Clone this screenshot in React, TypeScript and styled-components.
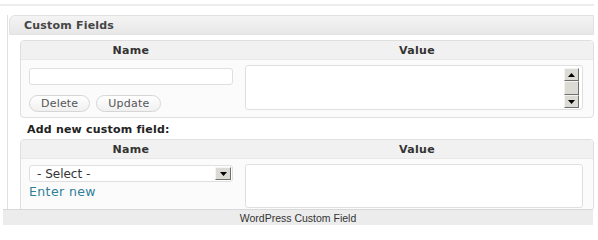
import React from 'react';
import styled, { createGlobalStyle } from 'styled-components';

const GlobalStyle = createGlobalStyle`
  html, body {
    margin: 0;
    padding: 0;
    background: #ffffff;
  }
  body {
    font-family: "DejaVu Sans", Verdana, sans-serif;
    color: #333333;
  }
`;

const Page = styled.div`
  width: 598px;
  height: 232px;
  padding-top: 4px;
  box-sizing: border-box;
  overflow: hidden;
`;

const Frame = styled.div`
  height: 205px;
  margin-right: 4px;
  border-top: 2px solid #ececec;
  box-sizing: border-box;
  padding: 9px 0 0 7px;
  overflow: hidden;
`;

const Postbox = styled.div`
  border-left: 1px solid #e0e0e0;
  height: 100%;
  box-sizing: border-box;
  padding-left: 1px;
`;

const TitleBar = styled.div`
  height: 20px;
  display: flex;
  align-items: center;
  padding-left: 14px;
  border: 1px solid #e2e2e2;
  border-radius: 6px 0 0 0;
  background: linear-gradient(#f4f4f4, #e7e7e7);
  font-size: 11px;
  font-weight: bold;
  letter-spacing: 0.2px;
  color: #464646;
  box-sizing: border-box;
`;

const Inside = styled.div`
  padding: 5px 0 0 11px;
`;

const Table = styled.div`
  display: grid;
  grid-template-columns: 220px 1fr;
  border: 1px solid #dfdfdf;
  border-radius: 4px;
  background: #fbfbfb;
  overflow: hidden;
`;

const HeadCell = styled.div`
  height: 18px;
  display: flex;
  align-items: center;
  justify-content: center;
  background: #f1f1f1;
  border-bottom: 1px solid #e8e8e8;
  font-size: 11px;
  font-weight: bold;
  letter-spacing: 0.3px;
  color: #333333;
`;

const NameCell = styled.div<{ $top: number }>`
  display: flex;
  flex-direction: column;
  align-items: flex-start;
  padding: ${({ $top }) => $top}px 0 5px 8px;
`;

const ValueCell = styled.div`
  padding: 5px 10px 5px 4px;
`;

const TextInput = styled.div`
  width: 204px;
  height: 17px;
  box-sizing: border-box;
  border: 1px solid #dfdfdf;
  border-radius: 3px;
  background: #ffffff;
`;

const Buttons = styled.div`
  display: flex;
  gap: 6px;
  margin-top: 10px;
`;

const Button = styled.div`
  height: 17px;
  padding: 0 11px;
  display: flex;
  align-items: center;
  box-sizing: border-box;
  border: 1px solid #d6d6d6;
  border-radius: 9px;
  background: linear-gradient(#ffffff, #f0f0f0);
  font-size: 11px;
  letter-spacing: 0.2px;
  color: #555555;
`;

const TextArea = styled.div<{ $height: number }>`
  position: relative;
  height: ${({ $height }) => $height}px;
  box-sizing: border-box;
  border: 1px solid #dfdfdf;
  border-radius: 3px;
  background: #ffffff;
`;

const ScrollBar = styled.div`
  position: absolute;
  right: 3px;
  top: 2px;
  bottom: 1px;
  width: 15px;
  display: flex;
  flex-direction: column;
  background: #e8e6e0;
`;

const ScrollButton = styled.div<{ $grow?: boolean }>`
  flex: ${({ $grow }) => ($grow ? '1' : '0 0 13px')};
  display: flex;
  align-items: center;
  justify-content: center;
  box-sizing: border-box;
  background: #dcdad4;
  border-top: 1px solid #f4f4f0;
  border-left: 1px solid #f4f4f0;
  border-right: 1px solid #6e6e6e;
  border-bottom: 1px solid #6e6e6e;
`;

const SubHeading = styled.div`
  padding: 5px 0 3px 7px;
  font-size: 11px;
  font-weight: bold;
  letter-spacing: 0.2px;
  color: #222222;
`;

const Select = styled.div`
  width: 204px;
  height: 17px;
  box-sizing: border-box;
  display: flex;
  align-items: center;
  justify-content: space-between;
  padding: 0 1px 0 7px;
  border: 1px solid #dfdfdf;
  border-radius: 3px;
  background: #ffffff;
  font-size: 12px;
  color: #333333;
`;

const SelectArrow = styled(ScrollButton)`
  flex: none;
  width: 16px;
  height: 13px;
`;

const EnterNew = styled.div`
  margin-top: 2px;
  font-size: 12.5px;
  color: #2e7f98;
  letter-spacing: 0.4px;
`;

const Footer = styled.div`
  height: 16px;
  margin: 0 5px 0 3px;
  display: flex;
  align-items: center;
  justify-content: center;
  background: #ececec;
  border-top: 1px solid #d8d8d8;
  font-family: "Liberation Sans", Arial, sans-serif;
  font-size: 10.5px;
  color: #333333;
  box-sizing: border-box;
`;

const Arrow: React.FC<{ up?: boolean }> = ({ up }) => (
  <svg width="7" height="4" viewBox="0 0 7 4">
    <polygon points={up ? '0,4 7,4 3.5,0' : '0,0 7,0 3.5,4'} fill="#000" />
  </svg>
);

const App: React.FC = () => {
  return (
    <Page>
      <GlobalStyle />
      <Frame>
        <Postbox>
          <TitleBar>Custom Fields</TitleBar>
          <Inside>
            <Table>
              <HeadCell>Name</HeadCell>
              <HeadCell>Value</HeadCell>
              <NameCell $top={8}>
                <TextInput />
                <Buttons>
                  <Button>Delete</Button>
                  <Button>Update</Button>
                </Buttons>
              </NameCell>
              <ValueCell>
                <TextArea $height={45}>
                  <ScrollBar>
                    <ScrollButton>
                      <Arrow up />
                    </ScrollButton>
                    <ScrollButton $grow />
                    <ScrollButton>
                      <Arrow />
                    </ScrollButton>
                  </ScrollBar>
                </TextArea>
              </ValueCell>
            </Table>
            <SubHeading>Add new custom field:</SubHeading>
            <Table>
              <HeadCell>Name</HeadCell>
              <HeadCell>Value</HeadCell>
              <NameCell $top={6}>
                <Select>
                  - Select -
                  <SelectArrow>
                    <Arrow />
                  </SelectArrow>
                </Select>
                <EnterNew>Enter new</EnterNew>
              </NameCell>
              <ValueCell>
                <TextArea $height={44} />
              </ValueCell>
            </Table>
          </Inside>
        </Postbox>
      </Frame>
      <Footer>WordPress Custom Field</Footer>
    </Page>
  );
};

export default App;
